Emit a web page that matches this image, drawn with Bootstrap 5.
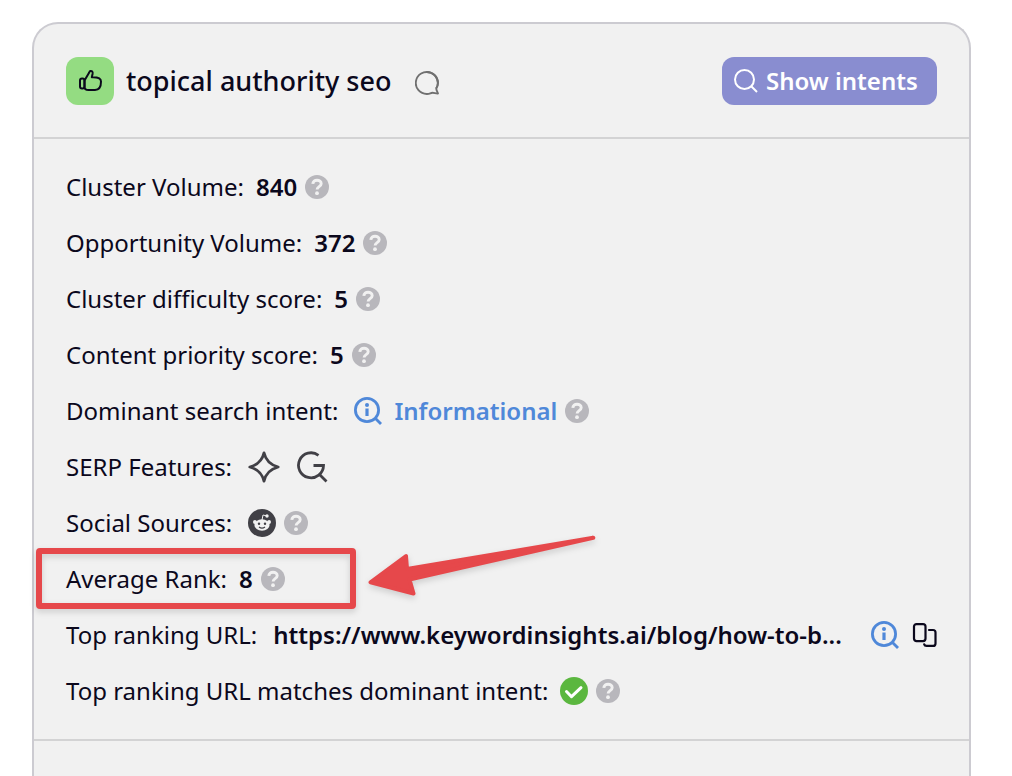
<!DOCTYPE html>
<html lang="en">
<head>
<meta charset="utf-8">
<meta name="viewport" content="width=device-width, initial-scale=1">
<title>Topical authority seo</title>
<link href="https://cdn.jsdelivr.net/npm/bootstrap@5.3.0/dist/css/bootstrap.min.css" rel="stylesheet">
<style>
  body { font-family: "Noto Sans", "Open Sans", sans-serif; color: #0b081c; background: #fff; }
  .page { padding: 22px 41px 0 32px; }
  .cluster { --bs-card-bg: #f1f1f1; border: 2px solid #cccbd1; border-bottom: 0; border-radius: 26px 26px 0 0; color: inherit; }
  .cluster-head { padding: 32px; border-bottom: 2px solid #d3d3d4; min-height: 115px; }
  .cluster-body { padding: 20px 32px; border-bottom: 2px solid #d3d3d4; }
  .cluster-title { font-size: 27px; font-weight: 500; line-height: 48px; }
  .thumb { width: 48px; height: 48px; border-radius: 12px; background: #94dc82; }
  .btn-intents { --bs-btn-bg: #898dd0; --bs-btn-color: #fff; --bs-btn-border-color: #898dd0; --bs-btn-hover-bg: #797dc4; --bs-btn-hover-color: #fff; width: 215px; height: 48px; padding: 0 12px; border: 0; border-radius: 12px; font-size: 24px; font-weight: 600; line-height: 48px; }
  .metric { height: 56px; font-size: 24px; line-height: 56px; gap: 8px; white-space: nowrap; position: relative; }
  .metric b, .metric a { font-weight: 600; color: inherit; text-decoration: none; }
  .metric-name { margin-right: 4px; }
  .metric .intent { color: #4f88d9; }
  .bare { border: 0; padding: 0; background: none; color: inherit; display: flex; }
  .help { color: #b8b7bc; }
  .ink { color: #414046; }
  .blue { color: #4f88d9; }
  svg { display: block; flex: none; }
  .mark-box { position: absolute; left: -30px; top: -3px; width: 320px; height: 61px; border: 6px solid #e6484b; border-radius: 4px; filter: drop-shadow(0 3px 3px rgba(0,0,0,.15)); pointer-events: none; }
  .mark-arrow { position: absolute; left: 288px; top: -31px; filter: drop-shadow(0 3px 3px rgba(0,0,0,.15)); pointer-events: none; }
</style>
</head>
<body>
<svg class="d-none" aria-hidden="true">
  <symbol id="help" viewBox="0 0 24 24"><circle cx="12" cy="12" r="12" fill="currentColor"/><path d="M7.800 8.900C7.900 6.600 9.800 5.200 12 5.200c2.400 0 4.200 1.400 4.200 3.500 0 2.900-4.100 2.900-4.100 5.700" fill="none" stroke="#f1f1f1" stroke-width="2.900"/><circle cx="12" cy="18.200" r="1.900" fill="#f1f1f1"/></symbol>
  <symbol id="info" viewBox="0 0 28 28"><g fill="none" stroke="currentColor" stroke-width="2.800"><circle cx="13" cy="13" r="11.600"/><path d="M21.500 21.500l5.500 5.500"/><path d="M13 11.500v7.500" stroke-width="3.200"/></g><circle cx="13" cy="8" r="2" fill="currentColor"/></symbol>
</svg>
<main class="page min-vh-100 d-flex flex-column">
  <section class="card cluster flex-grow-1">
    <header class="cluster-head d-flex align-items-center">
      <span class="thumb d-flex align-items-center justify-content-center">
        <svg width="24" height="24" viewBox="0 0 24 24" fill="none" stroke="#0b081c" stroke-width="2" stroke-linejoin="round"><rect x="2" y="9.500" width="4.500" height="10" rx="2"/><path d="M6.500 11.500L11.200 3.500C11.700 2 13 1.500 14 2.300c.8.700.8 1.500.6 2.500L13.800 8.300H15c4.500 0 8 1 8 4.300 0 4.500-1.500 8.400-6 8.400h-6.500c-2.500 0-4-1-4-3z"/></svg>
      </span>
      <h1 class="cluster-title mb-0 ms-2 ps-1">topical authority seo</h1>
      <button class="bare ms-4 mt-1" type="button" aria-label="Comments">
        <svg width="24" height="24" viewBox="0 0 24 24" fill="none" stroke="#707070" stroke-width="1.900" stroke-linejoin="round"><path d="M21.300 17.500A11 11 0 1 0 12 23c3 0 3.500-1.200 5.500-1.200 1.900 0 3.500.9 5.500.7-.4-1.800-1.700-2.800-1.700-5z"/><path d="M21 17.500Q23 15 23 12A11 11 0 0 0 12 1" /></svg>
      </button>
      <button class="btn btn-intents ms-auto d-flex align-items-center gap-2" type="button">
        <svg width="24" height="24" viewBox="0 0 24 24" fill="none" stroke="#fff" stroke-width="2"><circle cx="10.500" cy="10.500" r="9.500"/><path d="M17 17l6 6"/></svg>
        Show intents
      </button>
    </header>
    <div class="cluster-body">
      <ul class="list-unstyled mb-0">
        <li class="metric d-flex align-items-center"><span class="metric-name">Cluster Volume:</span><b>840</b><button class="bare help" type="button" aria-label="Help"><svg width="24" height="24"><use href="#help"/></svg></button></li>
        <li class="metric d-flex align-items-center"><span class="metric-name">Opportunity Volume:</span><b>372</b><button class="bare help" type="button" aria-label="Help"><svg width="24" height="24"><use href="#help"/></svg></button></li>
        <li class="metric d-flex align-items-center"><span class="metric-name">Cluster difficulty score:</span><b>5</b><button class="bare help" type="button" aria-label="Help"><svg width="24" height="24"><use href="#help"/></svg></button></li>
        <li class="metric d-flex align-items-center"><span class="metric-name">Content priority score:</span><b>5</b><button class="bare help" type="button" aria-label="Help"><svg width="24" height="24"><use href="#help"/></svg></button></li>
        <li class="metric d-flex align-items-center"><span class="metric-name">Dominant search intent:</span><svg class="blue ms-1 me-1" width="28" height="28"><use href="#info"/></svg><b class="intent">Informational</b><button class="bare help" type="button" aria-label="Help"><svg width="24" height="24"><use href="#help"/></svg></button></li>
        <li class="metric d-flex align-items-center"><span class="metric-name">SERP Features:</span>
          <svg class="ink ms-1" width="32" height="32" viewBox="0 0 32 32" fill="none" stroke="currentColor" stroke-width="2.800" stroke-linejoin="round"><path d="M16 1.800C17.500 8.500 22.500 14 30.200 16 22.500 18 17.500 23.500 16 30.200 14.500 23.500 9.500 18 1.800 16 9.500 14 14.500 8.500 16 1.800z"/></svg>
          <svg class="ink ms-2" width="32" height="32" viewBox="0 0 32 32" fill="none" stroke="currentColor" stroke-width="2.800"><path d="M22.500 4.300A12.500 12.500 0 1 0 27.500 14.500H17.500M23.500 23.500l7 7"/></svg></li>
        <li class="metric d-flex align-items-center"><span class="metric-name">Social Sources:</span>
          <svg class="ink ms-1" width="28" height="28" viewBox="0 0 28 28"><circle cx="14" cy="14" r="14" fill="currentColor"/><g fill="#f1f1f1"><ellipse cx="14" cy="16" rx="7.600" ry="5.700"/><circle cx="6.900" cy="13" r="1.900"/><circle cx="21.100" cy="13" r="1.900"/><circle cx="19" cy="7" r="1.700"/></g><path d="M14 11l1-5 4 1" fill="none" stroke="#f1f1f1"/><circle cx="11" cy="14.800" r="1.200" fill="currentColor"/><circle cx="17" cy="14.800" r="1.200" fill="currentColor"/><path d="M11 18q3 2.200 6 0" fill="none" stroke="currentColor" stroke-width="1.200"/></svg>
          <button class="bare help" type="button" aria-label="Help"><svg width="24" height="24"><use href="#help"/></svg></button></li>
        <li class="metric d-flex align-items-center"><span class="metric-name">Average Rank:</span><b>8</b><button class="bare help" type="button" aria-label="Help"><svg width="24" height="24"><use href="#help"/></svg></button>
          <span class="mark-box"></span>
          <svg class="mark-arrow" width="250" height="90" viewBox="354 520 250 90" fill="#e6484b" stroke="#e6484b" stroke-width="4" stroke-linejoin="round"><path d="M370.500 582.300L406 556l1 13L593.300 537.700 409.500 579.500l4 14z"/></svg></li>
        <li class="metric d-flex align-items-center"><span class="metric-name">Top ranking URL:</span><a class="ms-1" href="#">https://www.keywordinsights.ai/blog/how-to-b...</a>
          <button class="bare blue ms-auto" type="button" aria-label="Show intent"><svg width="28" height="28"><use href="#info"/></svg></button>
          <button class="bare ms-1" type="button" aria-label="Copy URL"><svg width="26" height="24" viewBox="0 0 26 24" fill="none" stroke="#0b081c" stroke-width="2.200" stroke-linecap="round"><rect x="3" y="1.100" width="11.500" height="17" rx="2.500"/><path d="M18 7h4c1.700 0 2.500.8 2.500 2.500v10.900c0 1.700-.8 2.500-2.500 2.500h-6.500c-1.200 0-2-.5-2.300-1.500"/></svg></button></li>
        <li class="metric d-flex align-items-center"><span class="metric-name">Top ranking URL matches dominant intent:</span>
          <svg width="28" height="28" viewBox="0 0 28 28"><circle cx="14" cy="14" r="14" fill="#5bb73f"/><path d="M6.500 14.500l5 5.200 9.500-9" fill="none" stroke="#fff" stroke-width="3" stroke-linecap="round" stroke-linejoin="round"/></svg>
          <button class="bare help" type="button" aria-label="Help"><svg width="24" height="24"><use href="#help"/></svg></button></li>
      </ul>
    </div>
  </section>
</main>
<script src="https://cdn.jsdelivr.net/npm/bootstrap@5.3.0/dist/js/bootstrap.bundle.min.js"></script>
</body>
</html>
